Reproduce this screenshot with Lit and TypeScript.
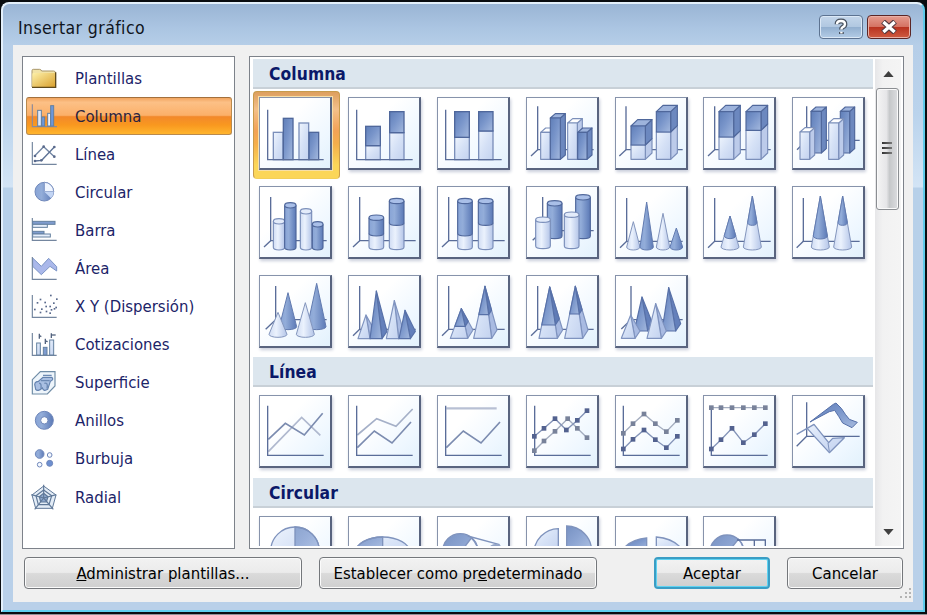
import { LitElement, html, svg, css } from "lit";
import { customElement, state } from "lit/decorators.js";
import { classMap } from "lit/directives/class-map.js";

type Pt = [number, number];
const D = "url(#dark)";
const L = "url(#light)";
const SIDE = "#6c88bf";
const LSIDE = "#bccbea";
const INK = "#5a6d99";
const SOFT = "#7f93bd";
const DARK_EDGE = "#4f679b";
const LIGHT_EDGE = "#7b8fba";

const pts = (p: Pt[]) => p.map((q) => q.join(",")).join(" ");
const poly = (p: Pt[], fill: string, ink = INK) =>
  svg`<polygon points=${pts(p)} fill=${fill} stroke=${ink} stroke-width="3.5" stroke-linejoin="round"></polygon>`;
const line = (p: Pt[], ink = INK, w = 4) =>
  svg`<polyline points=${pts(p)} fill="none" stroke=${ink} stroke-width=${w}></polyline>`;
const bar = (x0: number, x1: number, y0: number, y1: number, dark: boolean) =>
  svg`<rect x=${x0} y=${y0} width=${x1 - x0} height=${y1 - y0} fill=${dark ? D : L} stroke=${dark ? DARK_EDGE : LIGHT_EDGE} stroke-width="4"></rect>`;
const axes = (x = 26, top = 38, y = 188) => line([[x, top], [x, y], [194, y]], INK, 4);
const axes3 = (x = 35, top = 30, y = 161, dx = 20, dy = 19) =>
  svg`${line([[x, top], [x, y], [203, y]])}${line([[x, y], [x - dx, y + dy]])}`;

/* Extruded box whose front face spans x0..x1 and y0..y1 */
const box = (x0: number, x1: number, y0: number, y1: number, dark: boolean, dx = 15, dy = 13, cap = true) => {
  const ink = dark ? DARK_EDGE : LIGHT_EDGE;
  return svg`${poly([[x1, y0], [x1 + dx, y0 - dy], [x1 + dx, y1 - dy], [x1, y1]], dark ? SIDE : LSIDE, ink)}
    ${cap ? poly([[x0, y0], [x0 + dx, y0 - dy], [x1 + dx, y0 - dy], [x1, y0]], dark ? "#9db3dc" : "#fff", ink) : ""}
    ${poly([[x0, y0], [x1, y0], [x1, y1], [x0, y1]], dark ? D : L, ink)}`;
};
const stackBox = (x0: number, x1: number, y0: number, ym: number) =>
  svg`${box(x0, x1, ym, 187, false, 20, 19, false)}${box(x0, x1, y0, ym, true, 20, 19)}`;

const tube = (cx: number, rx: number, y0: number, y1: number, dark: boolean, cap = true) => {
  const ink = dark ? DARK_EDGE : LIGHT_EDGE;
  const ry = 8;
  return svg`<path d=${`M${cx - rx} ${y0}V${y1}A${rx} ${ry} 0 0 0 ${cx + rx} ${y1}V${y0}`} fill=${dark ? "url(#tubeD)" : "url(#tubeL)"} stroke=${ink} stroke-width="3.5"></path>
    ${cap ? svg`<ellipse cx=${cx} cy=${y0} rx=${rx} ry=${ry} fill=${dark ? "#a9bfe8" : "#e3ebfa"} stroke=${ink} stroke-width="3.5"></ellipse>` : ""}`;
};
const stackTube = (cx: number, y0: number, ym: number) =>
  svg`${tube(cx, 22, ym, 183, false, false)}${tube(cx, 22, y0, ym, true)}`;

const cone = (cx: number, y0: number, rx: number, y1: number, dark: boolean) =>
  svg`<path d=${`M${cx} ${y0}L${cx - rx} ${y1}A${rx} 9 0 0 0 ${cx + rx} ${y1}Z`} fill=${dark ? "url(#tubeD)" : "url(#tubeL)"} stroke=${dark ? "#627bb0" : "#8496bd"} stroke-width="3" stroke-linejoin="round"></path>`;
const stackCone = (cx: number, y0: number, ym: number) => {
  const rx = 27;
  const r = (rx * (ym - y0)) / (183 - y0);
  return svg`${cone(cx, y0, rx, 183, false)}${cone(cx, y0, r, ym, true)}`;
};

const pyramid = (ax: number, ay: number, x0: number, x1: number, y: number, dark: boolean, dx = 15, dy = 22) => {
  const ink = dark ? "#5871a8" : "#7f93bf";
  return svg`${poly([[ax, ay], [x1, y], [x1 + dx, y - dy]], dark ? "#6480bb" : "#a9bbe2", ink)}
    ${poly([[ax, ay], [x0, y], [x1, y]], dark ? D : L, ink)}`;
};
const stackPyramid = (ax: number, ay: number, x0: number, x1: number, ym: number) => {
  const y = 190;
  const t = (ym - ay) / (y - ay);
  const l = ax + (x0 - ax) * t;
  const r = ax + (x1 - ax) * t;
  const t2 = ax + (x1 + 16 - ax) * t;
  return svg`${pyramid(ax, ay, x0, x1, y, false, 16, 25)}
    ${poly([[ax, ay], [r, ym], [t2, ym - 25 * t]], "#5f7bb6", "#5871a8")}
    ${poly([[ax, ay], [l, ym], [r, ym]], D, "#5871a8")}`;
};

const marked = (p: Pt[], dark: boolean) =>
  svg`${line(p, dark ? "#8494b8" : "#a4adbf", 4)}${p.map(
    ([x, y]) => svg`<rect x=${x - 7} y=${y - 7} width="14" height="14" fill=${dark ? "#53628f" : "#78829a"}></rect>`)}`;

const columns = [
  svg`${bar(43, 72, 106, 188, false)}${bar(73, 102, 64, 188, true)}${bar(120, 149, 78, 188, false)}${bar(150, 179, 106, 188, true)}${axes()}`,
  svg`${bar(53, 97, 146, 188, false)}${bar(53, 97, 88, 146, true)}${bar(125, 168, 107, 188, false)}${bar(125, 168, 44, 107, true)}${axes()}`,
  svg`${bar(53, 97, 121, 188, false)}${bar(53, 97, 44, 121, true)}${bar(125, 168, 102, 188, false)}${bar(125, 168, 44, 102, true)}${axes()}`,
  svg`${axes3(35, 28, 158)}${box(44, 73, 106, 187, false)}${box(73, 103, 63, 187, true)}${box(125, 154, 78, 187, false)}${box(155, 183, 106, 187, true)}`,
  svg`${axes3(33, 28, 158)}${stackBox(48, 91, 87, 144)}${stackBox(124, 167, 44, 105)}`,
  svg`${axes3(35, 28, 158)}${stackBox(48, 92, 44, 120)}${stackBox(129, 174, 44, 100)}`,
  svg`${axes3(44, 28, 130, 29, 28)}${box(57, 88, 43, 168, true)}${box(145, 173, 43, 168, true)}${box(24, 53, 105, 187, false)}${box(110, 140, 78, 187, false)}`,
  svg`${axes3(35, 33, 164)}${tube(60, 17, 106, 184, false)}${tube(94, 17, 58, 184, true)}${tube(141, 17, 76, 184, false)}${tube(176, 16, 115, 184, true)}`,
  svg`${axes3(35, 33, 164)}${stackTube(85, 95, 142)}${stackTube(146, 45, 110)}`,
  svg`${axes3(35, 33, 164)}${stackTube(84, 45, 142)}${stackTube(146, 45, 110)}`,
  svg`${axes3(50, 33, 134, 30, 29)}${tube(86, 22, 52, 150, true)}${tube(171, 22, 34, 150, true)}${tube(51, 22, 101, 180, false)}${tube(137, 22, 86, 180, false)}`,
  svg`${axes3(35, 36, 166)}${cone(55, 107, 20, 183, false)}${cone(95, 48, 20, 183, true)}${cone(144, 82, 20, 183, false)}${cone(184, 126, 19, 183, true)}`,
  svg`${axes3(35, 36, 166)}${stackCone(81, 90, 149)}${stackCone(148, 30, 109)}`,
  svg`${axes3(34, 36, 166)}${stackCone(85, 30, 150)}${stackCone(152, 30, 109)}`,
  svg`${axes3(50, 33, 134, 30, 29)}${cone(87, 53, 26, 155, true)}${cone(173, 25, 28, 155, true)}${cone(57, 112, 27, 178, false)}${cone(139, 83, 27, 178, false)}`,
  svg`${axes3(35, 33, 163)}${pyramid(54, 120, 30, 66, 191, false)}${pyramid(85, 48, 66, 102, 191, true)}${pyramid(139, 77, 115, 152, 191, false)}${pyramid(171, 106, 153, 187, 191, true)}`,
  svg`${axes3(35, 33, 163)}${stackPyramid(73, 101, 40, 92, 154)}${stackPyramid(144, 34, 110, 164, 119)}`,
  svg`${axes3(35, 33, 163)}${stackPyramid(71, 36, 39, 94, 150)}${stackPyramid(148, 34, 116, 170, 117)}`,
  svg`${axes3(48, 33, 134, 29, 28)}${pyramid(81, 66, 58, 98, 168, true)}${pyramid(161, 38, 141, 182, 168, true)}${pyramid(47, 120, 19, 60, 190, false)}${pyramid(122, 86, 96, 139, 190, false)}`,
];

const marks = [25, 54, 87, 121, 154, 187];
const track = (ys: number[], xs = marks): Pt[] => ys.map((y, i) => [xs[i], y] as Pt);

const lines = [
  svg`${line([[28, 170], [128, 67], [184, 121]], "#b0b9cf", 5)}${line([[28, 133], [79, 85], [136, 120], [191, 55]], "#7c8cb0", 5)}${axes(26, 32, 181)}`,
  svg`${line([[28, 120], [86, 71], [144, 94], [194, 42]], "#a5b0c8", 5)}${line([[28, 158], [79, 108], [132, 144], [189, 81]], "#7c8cb0", 5)}${axes(26, 32, 181)}`,
  svg`${line([[28, 40], [179, 40]], "#b8c0d4", 7)}${line([[28, 158], [79, 108], [132, 144], [189, 81]], "#7c8cb0", 5)}${axes(26, 32, 181)}`,
  svg`${axes(26, 32, 181)}${marked(track([167, 138, 109, 71, 100, 128], [25, 54, 87, 125, 154, 183]), false)}${marked(track([124, 100, 71, 105, 76, 47], [25, 54, 87, 121, 154, 183]), true)}`,
  svg`${axes(25, 32, 181)}${marked(track([115, 86, 57, 86, 110, 76]), false)}${marked(track([162, 133, 105, 134, 158, 124]), true)}`,
  svg`${axes(25, 38, 181)}${marked(track([38, 38, 38, 38, 38, 38]), false)}${marked(track([162, 134, 100, 143, 119, 86]), true)}`,
  svg`${axes3(44, 22, 124, 30, 30)}
    <path d="M54 81L124 28L132 24L148 40L160 58L172 73L196 82L180 98L152 84L140 64L128 46L112 50Z" fill=${D} stroke="#5670a8" stroke-width="3" stroke-linejoin="round"></path>
    <path d="M14 118L66 88L110 143L122 130L157 128L112 173L46 101" fill=${L} stroke=${SOFT} stroke-width="4" stroke-linejoin="round"></path>
    ${line([[122, 130], [108, 144], [112, 170]], SOFT, 3)}`,
];

const pies = [
  svg`<circle cx="108" cy="106" r="73" fill="url(#light)" stroke=${SOFT} stroke-width="4"></circle><path d="M108 33A73 73 0 0 1 181 106H108Z" fill=${D} fill-opacity=".65" stroke=${SOFT} stroke-width="4"></path>`,
  svg`<ellipse cx="104" cy="110" rx="82" ry="47" fill=${L} stroke=${SOFT} stroke-width="4"></ellipse><path d="M104 63A82 47 0 0 0 22 110H104Z" fill=${D} fill-opacity=".75" stroke=${SOFT} stroke-width="4"></path>`,
  svg`<circle cx="70" cy="106" r="53" fill=${D} fill-opacity=".85" stroke=${SOFT} stroke-width="4"></circle><path d="M70 110L103 66Q122 84 124 110Z" fill="#f8fbff" stroke=${SOFT} stroke-width="4"></path>${line([[92, 60], [188, 86]], SOFT, 4)}<ellipse cx="176" cy="96" rx="19" ry="12" fill="#93a5c8"></ellipse>`,
  svg`<path d="M97 38A76 76 0 0 0 23 112H97Z" fill=${L} stroke=${SOFT} stroke-width="4"></path><path d="M122 30A76 76 0 0 1 197 106H122Z" fill=${D} fill-opacity=".85" stroke=${SOFT} stroke-width="4"></path>`,
  svg`<path d="M95 66Q46 70 20 104H95Z" fill=${D} stroke=${SOFT} stroke-width="4"></path><path d="M124 63Q180 68 204 104H124Z" fill=${L} stroke=${SOFT} stroke-width="4"></path>`,
  svg`<circle cx="72" cy="108" r="51" fill=${D} fill-opacity=".85" stroke=${SOFT} stroke-width="4"></circle><path d="M72 112L106 70Q120 84 124 112Z" fill="#f8fbff" stroke=${SOFT} stroke-width="4"></path>${line([[102, 72], [187, 72], [187, 110]], INK, 4)}${line([[154, 72], [154, 110]], INK, 4)}`,
];

const frame = line([[4, 3], [4, 70], [77, 70]], "#74869f", 3.5);
const dot = (x: number, y: number) => svg`<rect x=${x - 2} y=${y - 2} width="5" height="5" fill="#5a6a8c"></rect>`;
const ring = (x: number, y: number, r: number, f: string) =>
  svg`<circle cx=${x} cy=${y} r=${r} fill=${f} stroke="#6f87ba" stroke-width="3"></circle>`;
const small = (x: number, y: number, w: number, h: number, f = L) =>
  svg`<rect x=${x} y=${y} width=${w} height=${h} fill=${f} stroke="#64809f" stroke-width="3"></rect>`;

const categories = [
  { name: "Plantillas", art: svg`<path d="M3 66V17Q3 13 7 13H26Q30 13 32 18H68Q73 18 73 23V66Z" fill="#f2e3a6" stroke="#a8966a" stroke-width="3"></path><path d="M4 27Q4 24 8 24H70Q73 24 73 27V66H4Z" fill="url(#gold)"></path><path d="M3 67H74V22" fill="none" stroke="#5f4a1c" stroke-width="4"></path>` },
  { name: "Columna", art: svg`${line([[4, 4], [4, 71], [78, 71]], "#8c8a9a", 3.5)}${small(20, 22, 11, 47, "#dfe9fa")}${small(32, 42, 9, 27, "#6c97dc")}${small(50, 31, 9, 38, "#eef4ff")}${small(59, 8, 9, 61, "#6c97dc")}` },
  { name: "Línea", art: svg`${frame}${line([[10, 46], [38, 17], [70, 47]], "#7286a4", 4)}${line([[12, 60], [32, 58], [70, 18]], "#5e7396", 4)}${[[38, 17], [70, 47], [12, 60], [31, 58], [70, 18], [12, 45]].map((p) => svg`<circle cx=${p[0]} cy=${p[1]} r="4" fill="#5a6a8c"></circle>`)}` },
  { name: "Circular", art: svg`${ring(40, 38, 28, "url(#tubeD)")}<path d="M40 38V10A28 28 0 0 1 68 38Z" fill="#f1f6ff" stroke="#8398c6" stroke-width="3"></path><path d="M40 38H68A28 28 0 0 1 60 58Z" fill="#c3d5f4"></path>` },
  { name: "Barra", art: svg`${frame}${small(5, 13, 67, 9, "#7f9ccf")}${small(5, 22, 44, 9, "#e7effc")}${small(5, 43, 34, 8, "#7f9ccf")}${small(5, 51, 53, 9, "#e7effc")}` },
  { name: "Área", art: svg`<path d="M5 6L31 31L53 7L77 32V45L57 31L31 56L5 31Z" fill="#aab8ea" stroke="#7c95c6" stroke-width="3"></path>${frame}` },
  { name: "X Y (Dispersión)", art: svg`${frame}${[[28, 16], [59, 4], [77, 15], [42, 25], [19, 26], [68, 27], [11, 46], [32, 45], [45, 37], [57, 37], [70, 44], [28, 55], [46, 52], [61, 47], [57, 57], [75, 40]].map((p) => dot(p[0], p[1]))}` },
  { name: "Cotizaciones", art: svg`${frame}${small(17, 33, 11, 36)}${small(37, 46, 11, 23, "#7f9ccf")}${small(56, 24, 12, 45)}${line([[25, 5], [25, 20]], "#53647f", 4)}${line([[25, 11], [31, 14]], "#53647f", 4)}${line([[43, 20], [43, 36]], "#53647f", 4)}${line([[43, 27], [50, 29]], "#53647f", 4)}${line([[61, 4], [61, 18]], "#53647f", 4)}${line([[61, 9], [74, 9]], "#53647f", 4)}` },
  { name: "Superficie", art: svg`<path d="M4 29L28 5H72V48L49 72H4Z" fill="#eef5fb" stroke="#6f8ca6" stroke-width="3.5"></path><path d="M12 48Q8 36 22 34L36 22H62Q70 28 58 34L50 58Q38 66 34 54Q20 66 14 58Z" fill="#a9bfe2" stroke="#6482ae" stroke-width="3.5"></path><path d="M30 32H56M24 40Q32 38 30 56M40 40Q52 36 48 56M36 16H62" fill="none" stroke="#6d8ab4" stroke-width="4"></path>` },
  { name: "Anillos", art: svg`${ring(40, 37, 27, "url(#tubeD)")}${ring(40, 37, 11, "#fbfdff")}` },
  { name: "Burbuja", art: svg`${ring(26, 24, 13, "url(#tubeD)")}${ring(56, 27, 7, "#f5f9ff")}${ring(26, 56, 7, "#f5f9ff")}${ring(56, 52, 9, "#6d8fd0")}` },
  { name: "Radial", art: svg`<g fill="none" stroke="#5f7898" stroke-width="3.5"><path d="M38 6L75 33L64 73H14L3 33Z" fill="#e3ecf6" stroke-width="3"></path><path d="M38 18L62 35L54 62H22L15 35Z"></path><path d="M38 28L51 38L46 54H29L25 38Z" fill="#8fa9cf"></path><path d="M38 2V42M76 32L38 42L67 76M38 42L11 76M38 42L1 32"></path></g>` },
];

const groups = [
  { name: "Columna", items: columns },
  { name: "Línea", items: lines },
  { name: "Circular", items: pies },
];

@customElement("app-root")
export class AppRoot extends LitElement {
  @state() private category = 1;
  @state() private pick = "0-0";

  static styles = css`
    :host { display: block; width: 927px; height: 615px; overflow: hidden; background: #0a0d10; font-family: "DejaVu Sans Condensed", "DejaVu Sans", sans-serif; font-stretch: condensed; font-size: 16.6px; color: #000; }
    * { box-sizing: border-box; }
    .defs { position: absolute; width: 0; height: 0; }
    .shell { height: 615px; padding: 2px 2px 2px 1px; border-bottom: 1px solid #8f9496; }
    .window { height: 100%; display: flex; flex-direction: column; padding: 0 10px 8px; border: 2px solid #e4f0fb; border-right-color: #5fcbe9; border-bottom-color: #5dd0ee; border-radius: 8px 8px 0 0; background: linear-gradient(#9ab5d5, #abc5e2 24px, #b6cee8 42px, #bad3ec 110px, #d3e4f5 183px, #b7d0e9 184px, #b9d0e9); }
    .title { height: 41px; flex: none; display: flex; align-items: center; gap: 4px; padding: 7px 2px 0 5px; }
    .title h1 { flex: 1; margin: 0; font-weight: 400; font-size: 17.5px; letter-spacing: .4px; color: #10151c; }
    .cap { display: flex; width: 44px; height: 24px; padding: 0; border: 1.5px solid #5d7391; border-radius: 4px; box-shadow: inset 0 0 0 1px #dbe8f6; background: linear-gradient(#c4d6ea, #b1c8e1 48%, #93b0d0 52%, #b3cce6); align-items: center; justify-content: center; margin-top: -2px; }
    .cap.close { border-color: #5b2626; box-shadow: inset 0 0 0 1px #eab0a6; background: linear-gradient(#e59c8f, #d57363 48%, #b93320 52%, #cf5b41); }
    .body { flex: 1; min-height: 0; display: flex; flex-direction: column; background: #f0f0f0; padding: 11px 9px 12px 9px; }
    .panes { height: 493px; flex: none; display: flex; gap: 14px; }
    .list { width: 213px; margin: 0; padding: 2px 2px 0 3px; list-style: none; background: #fff; border: 1px solid #7d828a; }
    .list li { height: 38.1px; display: flex; align-items: center; gap: 18px; padding-left: 4px; border: 1px solid transparent; border-radius: 3px; color: #1c2468; }
    .list li.on { border-color: #b98a4e; border-top-color: #a3703c; color: #2a2440; background: linear-gradient(#f2a560, #fcc086 12%, #fbb069 48%, #f2892b 52%, #f9981f 75%, #ffb52e); }
    .list svg { width: 26px; height: 26px; flex: none; overflow: visible; }
    .gallery { flex: 1; min-width: 0; display: flex; background: #fff; border: 1px solid #7d828a; padding: 2px 2px 2px 3px; }
    .groups { flex: 1; min-width: 0; overflow: hidden; }
    .groups h2 { margin: 0; height: 30px; padding: 2px 0 0 16px; display: flex; align-items: center; font-size: 17.3px; font-weight: 700; letter-spacing: .1px; color: #0a1868; background: #dce6ee; border-bottom: 2px solid #c8d0d7; }
    .grid { display: grid; grid-template-columns: repeat(7, 73px); gap: 16px 15.9px; padding: 8px 0 9px 6px; }
    .group + .group .grid { padding-bottom: 10px; }
    .card { display: block; position: relative; width: 73px; height: 73px; border: 1px solid #8793ab; border-right: 2px solid #59647f; border-bottom: 2px solid #59647f; background: linear-gradient(135deg, #fff 35%, #eef7ff 75%, #e2f1fc); box-shadow: 1px 2px 3px #c9cedb; padding: 0; }
    .card svg { position: absolute; left: -1px; top: -1px; width: 73px; height: 73px; }
    .card.on { box-shadow: 0 0 0 1px #f7dfa8; }
    .card.on::before { content: ""; position: absolute; z-index: -1; inset: -7px -10px -11px -7px; border: 1px solid #c79b4c; border-bottom-color: #f3cf5a; border-radius: 4px; background: linear-gradient(#dd9f5e, #f3c08a 20%, #f2a256 45%, #f5ae4c 60%, #fbd659 85%, #fbd659); }
    .holder { position: relative; z-index: 0; }
    .scroll { width: 26px; margin-left: 2px; display: flex; flex-direction: column; align-items: center; background: linear-gradient(90deg, #e6e6e8, #f2f2f2 30%, #f4f4f4); }
    .arrow { width: 12px; height: 29px; flex: none; display: flex; align-items: center; justify-content: center; }
    .thumb { width: 23px; height: 122px; margin-right: 2px; border: 1px solid #8b8e92; border-radius: 3px; box-shadow: inset 0 0 0 1px #fafafa; background: linear-gradient(90deg, #f4f4f4, #e6e6e8 45%, #c6c8ca 60%, #dcdde0); display: flex; flex-direction: column; justify-content: center; gap: 3px; align-items: center; }
    .thumb i { width: 10px; height: 2px; background: linear-gradient(90deg, #333, #777); }
    .thumb i:last-child { margin-bottom: 3px; }
    .rest { flex: 1; }
    .actions { display: flex; margin-top: 8px; padding-left: 2px; height: 32px; flex: none; }
    .actions button { font: inherit; padding: 0; height: 32px; width: 116px; border: 1.5px solid #74777b; border-radius: 4px; color: #000; box-shadow: inset 0 0 0 1px #fbfbfb; background: linear-gradient(#f2f2f2, #ebebeb 48%, #dadada 52%, #cfcfcf); }
    .actions .wide { width: 278px; margin-right: 17px; }
    .actions .ok { margin-left: 40px; margin-right: 17px; border: 2px solid #3a9dc4; box-shadow: inset 0 0 0 1px #5fd3f2; }
    .grip { position: absolute; left: 899px; top: 587px; width: 13px; height: 13px; }
  `;

  render() {
    return html`
      <svg class="defs">
        <defs>
          <linearGradient id="dark" x1="0" y1="0" x2="1" y2="1"><stop offset="0" stop-color="#5f7eb8"></stop><stop offset=".45" stop-color="#7995ca"></stop><stop offset="1" stop-color="#a4b9de"></stop></linearGradient>
          <linearGradient id="light" x1="0" y1="0" x2="1" y2="1"><stop offset="0" stop-color="#eef4fd"></stop><stop offset=".5" stop-color="#d5e1f6"></stop><stop offset="1" stop-color="#c3d2ef"></stop></linearGradient>
          <linearGradient id="tubeD"><stop offset="0" stop-color="#88a4d6"></stop><stop offset=".35" stop-color="#93add9"></stop><stop offset="1" stop-color="#5b79b6"></stop></linearGradient>
          <linearGradient id="tubeL"><stop offset="0" stop-color="#d0dcf3"></stop><stop offset=".4" stop-color="#ebf2fd"></stop><stop offset="1" stop-color="#b4c5e8"></stop></linearGradient>
          <linearGradient id="gold" x1="0" y1="0" x2="1" y2="1"><stop offset="0" stop-color="#fdf0a8"></stop><stop offset="1" stop-color="#d9a02e"></stop></linearGradient>
        </defs>
      </svg>
      <div class="shell">
        <div class="window">
          <div class="title">
            <h1>Insertar gráfico</h1>
            <button class="cap" aria-label="Ayuda"><svg width="16" height="18" viewBox="0 0 16 18"><path d="M4 6.2Q4 3 8 3T12 6.2Q12 8 9.6 9.2Q8.4 10 8.4 11.4M8.4 14V16" fill="none" stroke="#48525f" stroke-width="4.8"></path><path d="M4 6.2Q4 3 8 3T12 6.2Q12 8 9.6 9.2Q8.4 10 8.4 11.4M8.4 13.8V15.6" fill="none" stroke="#fff" stroke-width="2.4"></path></svg></button>
            <button class="cap close" aria-label="Cerrar"><svg width="18" height="14" viewBox="0 0 18 14"><path d="M3 1.5L15 12.5M15 1.5L3 12.5" stroke="#523a40" stroke-width="5.6"></path><path d="M3.4 2L14.6 12M14.6 2L3.4 12" stroke="#fff" stroke-width="3.4"></path></svg></button>
          </div>
          <div class="body">
            <div class="panes">
              <ul class="list">
                ${categories.map((c, i) => html`<li class=${classMap({ on: i === this.category })} @click=${() => (this.category = i)}><svg viewBox="0 0 78 78">${c.art}</svg><span>${c.name}</span></li>`)}
              </ul>
              <div class="gallery">
                <div class="groups">
                  ${groups.map((g, gi) => html`<section class="group"><h2>${g.name}</h2><div class="grid">
                    ${g.items.map((art, i) => { const id = `${gi}-${i}`; return html`<div class="holder"><button class=${classMap({ card: true, on: id === this.pick })} @click=${() => (this.pick = id)}><svg viewBox="0 0 219 219">${art}</svg></button></div>`; })}
                  </div></section>`)}
                </div>
                <div class="scroll">
                  <div class="arrow"><svg width="11" height="6" viewBox="0 0 12 7"><path d="M6 0L12 7H0Z" fill="#404040"></path></svg></div>
                  <div class="thumb"><i></i><i></i><i></i></div>
                  <div class="rest"></div>
                  <div class="arrow"><svg width="11" height="6" viewBox="0 0 12 7"><path d="M0 0H12L6 7Z" fill="#404040"></path></svg></div>
                </div>
              </div>
            </div>
            <div class="actions">
              <button class="wide"><u>A</u>dministrar plantillas...</button>
              <button class="wide">Establecer como pr<u>e</u>determinado</button>
              <button class="ok">Aceptar</button>
              <button>Cancelar</button>
            </div>
          </div>
        </div>
      </div>
      <svg class="grip" viewBox="0 0 13 13" fill="#b4b4b4"><path d="M10 1h2v2h-2zM6 5h2v2h-2zM10 5h2v2h-2zM1 9h2v2h-2zM6 9h2v2h-2zM10 9h2v2h-2z"></path></svg>
    `;
  }
}
